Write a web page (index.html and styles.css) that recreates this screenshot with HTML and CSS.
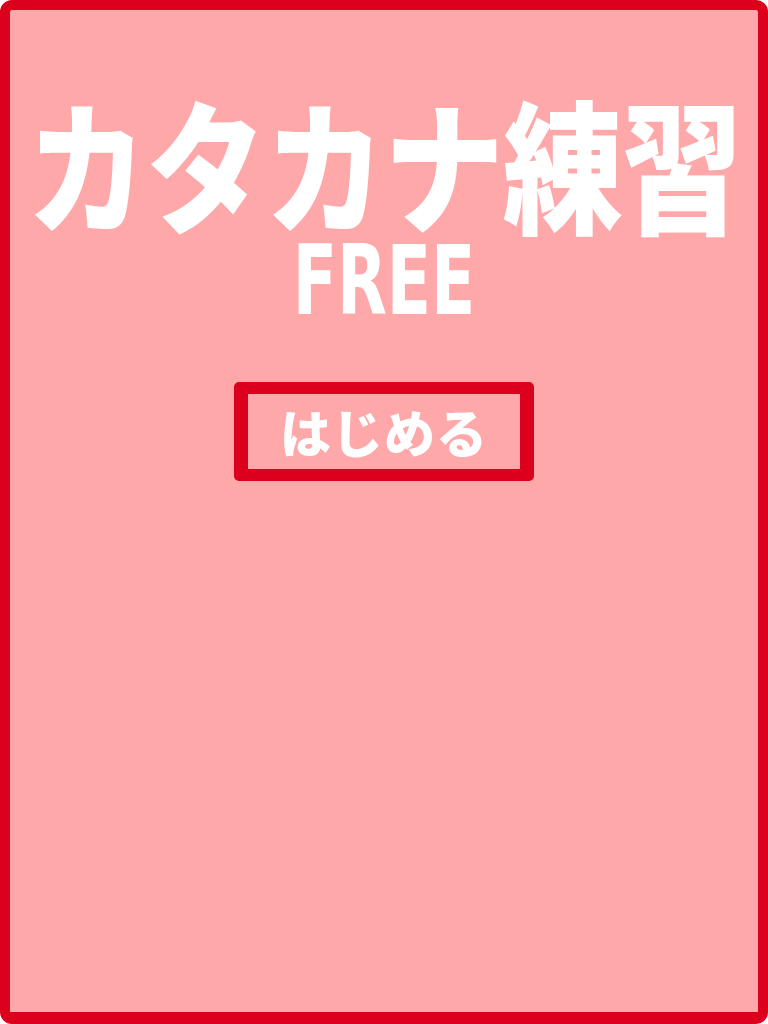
FILE: index.html
```html
<!DOCTYPE html>
<html lang="ja">
<head>
<meta charset="utf-8">
<title>カタカナ練習 FREE</title>
<link rel="stylesheet" href="styles.css">
</head>
<body>
<main class="frame">
  <h1 class="title">カタカナ練習</h1>
  <div class="subtitle">FREE</div>
  <button class="start">はじめる</button>
</main>
</body>
</html>
```

FILE: styles.css
```css
html, body {
  margin: 0;
  padding: 0;
  background: #ffffff;
}
.frame {
  box-sizing: border-box;
  width: 768px;
  height: 1024px;
  border: 10px solid #dc001c;
  border-bottom-width: 12px;
  border-radius: 12px;
  background: #ffa8aa;
  display: flex;
  flex-direction: column;
  align-items: center;
  padding-top: 80px;
  font-family: "Noto Sans CJK JP", "Liberation Sans", sans-serif;
  color: #ffffff;
}
.title {
  margin: 0 0 23px 0;
  font-size: 120px;
  line-height: 120px;
  font-weight: 900;
  letter-spacing: -1px;
  white-space: nowrap;
  transform: scaleY(1.19);
  transform-origin: center top;
}
.subtitle {
  margin: 13px 0 17px 0;
  font-family: "DejaVu Sans Condensed", "DejaVu Sans", "Liberation Sans", sans-serif;
  font-stretch: condensed;
  font-weight: 700;
  font-size: 72px;
  line-height: 52px;
  letter-spacing: 0;
  transform: scaleY(1.33);
  transform-origin: center top;
}
.start {
  margin-top: 67px;
  box-sizing: border-box;
  width: 300px;
  height: 99px;
  border: 12px solid #dc001c;
  border-left-width: 14px;
  border-right-width: 14px;
  border-radius: 5px;
  background: transparent;
  color: #ffffff;
  font-family: "Noto Sans CJK JP", sans-serif;
  font-weight: 900;
  font-size: 51px;
  line-height: 1;
  letter-spacing: 1px;
  padding: 0;
}
```
